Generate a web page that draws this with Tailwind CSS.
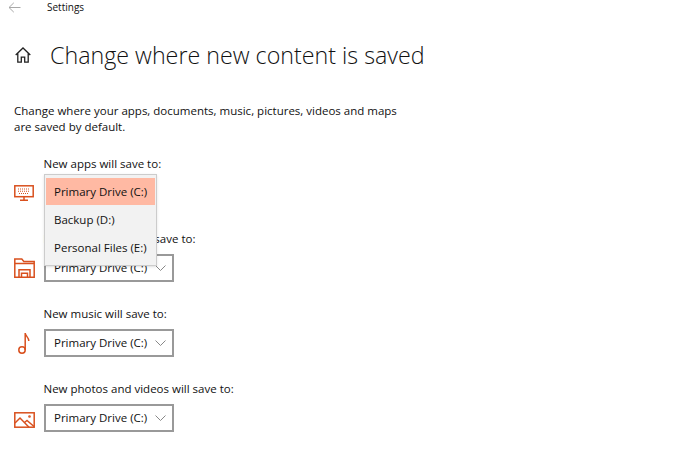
<!DOCTYPE html>
<html>
<head>
<meta charset="utf-8">
<script src="https://cdn.jsdelivr.net/npm/@tailwindcss/browser@4"></script>
</head>
<body class="bg-white">
<div class="relative w-[700px] h-[451px] overflow-hidden bg-white text-[#111] font-['Open_Sans',sans-serif]">
  <div class="flex items-center h-[14px] pl-[8px]">
    <svg width="13" height="11" viewBox="0 0 13 11" fill="none" stroke="#a8a8a8" stroke-width="1"><path d="M12.5 5.5H1M5.8 .8 1 5.5l4.8 4.7"/></svg>
    <span class="ml-[26px] text-[10px] leading-[14px]">Settings</span>
  </div>
  <div class="flex items-center mt-[26px] pl-[15px] h-[30px]">
    <svg width="16" height="16" viewBox="0 0 16 16" fill="none" stroke="#222" stroke-width="1.3"><path d="M.7 8 8 1l7.3 7M2.8 6.3v8.9h3.5v-5h3.4v5h3.5V6.3"/></svg>
    <h1 class="ml-[19px] text-[23.25px] leading-[30px] font-light whitespace-nowrap">Change where new content is saved</h1>
  </div>
  <p class="mt-[33px] ml-[14px] w-[400px] text-[11.5px] leading-[16px]">Change where your apps, documents, music, pictures, videos and maps<br>are saved by default.</p>

  <div class="mt-[21px] pl-[14px] flex flex-col gap-[20px]">
    <div class="relative h-[55px]">
      <div class="ml-[29.5px] text-[11.5px] leading-[16px]">New apps will save to:</div>
      <div class="flex items-center mt-[7px] h-[28px]">
        <div class="w-[30px] h-[28px] flex items-center">
          <svg width="20" height="16" viewBox="0 0 20 16" fill="none" stroke="#d9501e" stroke-width="1.5"><rect x=".8" y=".8" width="18.4" height="10.9"/><path d="M10 12v3M6 15.2h8"/><path d="M4 4h12M4 6.2h12M5 8.5h10" stroke-width="1.1" stroke-dasharray="1 1"/></svg>
        </div>
      </div>
      <div class="absolute left-[30px] top-[18px] z-10 w-[113px] h-[92px] bg-[#f2f2f2] border border-[#ccc] pt-[3px] text-[11.5px] shadow-sm">
        <div class="flex items-center h-[27px] mx-px pl-[8px] bg-[#ffb9a3]">Primary Drive (C:)</div>
        <div class="flex items-center h-[28px] mt-px pl-[9px]">Backup (D:)</div>
        <div class="flex items-center h-[28px] pl-[9px]">Personal Files (E:)</div>
      </div>
    </div>

    <div class="h-[55px]">
      <div class="ml-[29.5px] text-[11.5px] leading-[16px]">New documents will save to:</div>
      <div class="flex items-center mt-[7px]">
        <div class="w-[30px] h-[28px] flex items-center">
          <svg width="21" height="20" viewBox="0 0 21 20" fill="none" stroke="#d9501e" stroke-width="1.5"><path d="M.8 19.2V1h7l2 2.5h10.4v15.7zM.8 5.5h19.4M5 19.2v-7.5h11v7.5M7.5 19.2v-4h6v4"/></svg>
        </div>
        <div class="flex items-center justify-between w-[130px] h-[28px] border-2 border-[#999] pl-[8px] pr-[6px] text-[11.5px]">Primary Drive (C:)
          <svg width="11" height="6" viewBox="0 0 11 6" fill="none" stroke="#888"><path d="m.5.5 5 5 5-5"/></svg>
        </div>
      </div>
    </div>

    <div class="h-[55px]">
      <div class="ml-[29.5px] text-[11.5px] leading-[16px]">New music will save to:</div>
      <div class="flex items-center mt-[7px]">
        <div class="w-[30px] h-[28px] flex items-center">
          <svg class="ml-[3px]" width="13" height="22" viewBox="0 0 13 22" fill="none" stroke="#d9501e" stroke-width="1.5"><circle cx="5" cy="18" r="3.2"/><path d="M8.2 18V1c0 3 3.6 4 3.6 8"/></svg>
        </div>
        <div class="flex items-center justify-between w-[130px] h-[28px] border-2 border-[#999] pl-[8px] pr-[6px] text-[11.5px]">Primary Drive (C:)
          <svg width="11" height="6" viewBox="0 0 11 6" fill="none" stroke="#888"><path d="m.5.5 5 5 5-5"/></svg>
        </div>
      </div>
    </div>

    <div class="h-[55px]">
      <div class="ml-[29.5px] text-[11.5px] leading-[16px]">New photos and videos will save to:</div>
      <div class="flex items-center mt-[7px]">
        <div class="w-[30px] h-[28px] flex items-center">
          <svg class="mt-[3px]" width="21" height="16" viewBox="0 0 21 16" fill="none" stroke="#d9501e" stroke-width="1.5"><rect x=".8" y=".8" width="19.4" height="14.4"/><path d="m1 11 5-5 9 9.3M10.5 10.5l2.5-2 7 6"/><circle cx="15.5" cy="4.5" r=".6"/></svg>
        </div>
        <div class="flex items-center justify-between w-[130px] h-[28px] border-2 border-[#999] pl-[8px] pr-[6px] text-[11.5px]">Primary Drive (C:)
          <svg width="11" height="6" viewBox="0 0 11 6" fill="none" stroke="#888"><path d="m.5.5 5 5 5-5"/></svg>
        </div>
      </div>
    </div>
  </div>
</div>
</body>
</html>
